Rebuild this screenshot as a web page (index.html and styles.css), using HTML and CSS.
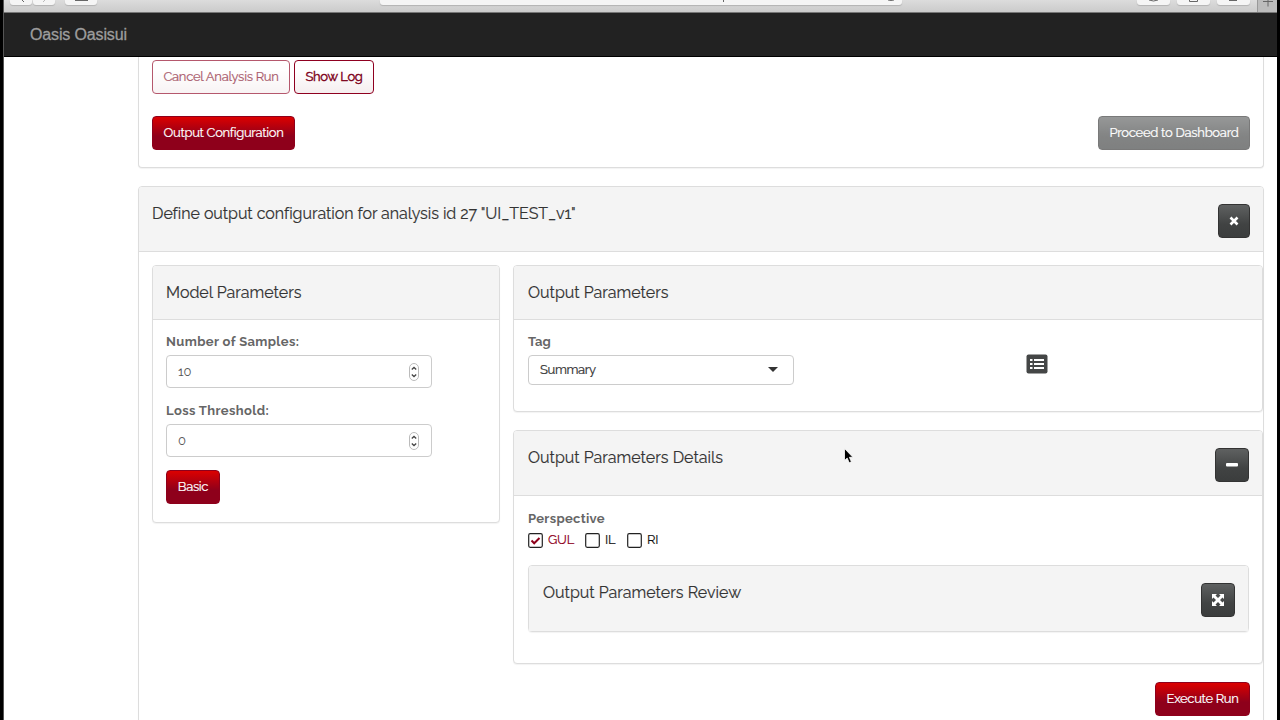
FILE: index.html
```
<!DOCTYPE html>
<html lang="en">
  <head>
    <meta charset="UTF-8" />
    <meta name="viewport" content="width=device-width, initial-scale=1.0" />
    <title>Oasis Oasisui</title>
    <link rel="stylesheet" href="styles.css">
  </head>
  <body>
    <div class="window">
      <div class="toolbar">
        <div class="tool nav-tool">
          <svg width="22" height="5"><path d="M12 0l2 2" /></svg>
        </div>
        <div class="tool nav-tool">
          <svg width="22" height="5"><path class="faint" d="M12 0l-2 2" /></svg>
        </div>
        <div class="tool tabs-tool">
          <svg width="32" height="5"><path d="M10 .5h13" /></svg>
        </div>
        <div class="address">
          <svg width="522" height="5"><path d="M343.500 0v2M508 0q3 1 6 0" /></svg>
        </div>
        <div class="tools-right">
          <div class="tool side-tool">
            <svg width="33" height="5"><path d="M12 0q4.500 2 9 0" /></svg>
          </div>
          <div class="tool side-tool">
            <svg width="33" height="5"><path d="M12.500 0v1.500h8V0" /></svg>
          </div>
          <div class="tool side-tool">
            <svg width="33" height="5"><path d="M12 .5h8" /></svg>
          </div>
        </div>
        <div class="new-tab">
          <svg width="20" height="12"><path d="M5 1.500h10M10 0v6.500" /></svg>
        </div>
      </div>

      <nav class="navbar"><span class="brand">Oasis Oasisui</span></nav>

      <main class="content">
        <section class="panel run-panel">
          <div class="row run-buttons">
            <button class="btn btn-outline cancel" disabled>Cancel Analysis Run</button>
            <button class="btn btn-outline log">Show Log</button>
          </div>
          <div class="row between">
            <button class="btn btn-primary configure">Output Configuration</button>
            <button class="btn btn-dark dashboard" disabled>Proceed to Dashboard</button>
          </div>
        </section>

        <section class="panel config-panel">
          <header class="panel-heading tall">
            <h4 class="config-title">Define output configuration for analysis id 27 "UI_TEST_v1"</h4>
            <button class="btn btn-dark icon-btn close" aria-label="Close">
              <svg width="10" height="10" viewBox="0 0 10 10"><path class="cross" d="M1.500 1.500l7 7M8.500 1.500l-7 7" /></svg>
            </button>
          </header>

          <div class="config-body">
            <section class="panel model-panel">
              <header class="panel-heading">
                <h4>Model Parameters</h4>
              </header>
              <div class="panel-body">
                <label class="label" for="samples">Number of Samples:</label>
                <div class="field">
                  <input id="samples" type="text" value="10" />
                  <svg class="spinner" width="10" height="18" viewBox="0 0 10 18"><rect x=".5" y=".5" width="9" height="17" rx="4.500" /><path d="M2.800 6.500L5 4.500l2.200 2M2.800 11.500l2.200 2 2.200-2" /></svg>
                </div>
                <label class="label" for="threshold">Loss Threshold:</label>
                <div class="field last">
                  <input id="threshold" type="text" value="0" />
                  <svg class="spinner" width="10" height="18" viewBox="0 0 10 18"><rect x=".5" y=".5" width="9" height="17" rx="4.500" /><path d="M2.800 6.500L5 4.500l2.200 2M2.800 11.500l2.200 2 2.200-2" /></svg>
                </div>
                <button class="btn btn-primary basic">Basic</button>
              </div>
            </section>

            <div class="output-column">
              <section class="panel output-panel">
                <header class="panel-heading">
                  <h4>Output Parameters</h4>
                </header>
                <div class="panel-body tag-row">
                  <div class="tag-field">
                    <span class="label tag-label">Tag</span>
                    <div class="select"><span>Summary</span><i class="caret"></i></div>
                  </div>
                  <svg class="list-icon" width="22" height="20" viewBox="0 0 22 20">
                    <rect class="list-back" x=".5" y=".5" width="21" height="19" rx="2" />
                    <path d="M4 6h2.500M8 6h10M4 10h2.500M8 10h10M4 14h2.500M8 14h10" />
                  </svg>
                </div>
              </section>

              <section class="panel details-panel">
                <header class="panel-heading tall">
                  <h4>Output Parameters Details</h4>
                  <button class="btn btn-dark icon-btn" aria-label="Collapse">
                    <svg width="12" height="4" viewBox="0 0 12 4"><rect width="12" height="3.500" rx="1" fill="#fff" /></svg>
                  </button>
                </header>
                <div class="panel-body">
                  <span class="label perspective">Perspective</span>
                  <div class="checks">
                    <label class="check">
                      <svg width="15" height="15" viewBox="0 0 15 15"><rect x=".7" y=".7" width="13.600" height="13.600" rx="1.500" /><path d="M3.500 7.500l2.700 2.800 5.300-5.300" /></svg>
                      <span class="gul">GUL</span>
                    </label>
                    <label class="check">
                      <svg width="15" height="15" viewBox="0 0 15 15"><rect x=".7" y=".7" width="13.600" height="13.600" rx="1.500" /></svg>
                      <span class="il">IL</span>
                    </label>
                    <label class="check">
                      <svg width="15" height="15" viewBox="0 0 15 15"><rect x=".7" y=".7" width="13.600" height="13.600" rx="1.500" /></svg>
                      <span>RI</span>
                    </label>
                  </div>
                  <section class="panel review-panel">
                    <header class="panel-heading tall">
                      <h4>Output Parameters Review</h4>
                      <button class="btn btn-dark icon-btn" aria-label="Expand">
                        <svg width="12" height="12" viewBox="0 0 12 12"><path fill="#fff" d="M0 0h5L3.500 1.500 6 4l2.500-2.500L7 0h5v5l-1.500-1.500L8 6l2.500 2.500L12 7v5H7l1.500-1.500L6 8l-2.500 2.500L5 12H0V7l1.500 1.500L4 6 1.500 3.500 0 5z" /></svg>
                      </button>
                    </header>
                  </section>
                </div>
              </section>

              <div class="actions">
                <button class="btn btn-primary execute">Execute Run</button>
              </div>
            </div>
          </div>
        </section>
      </main>
    </div>

    <svg class="pointer" width="12" height="18" viewBox="0 0 12 18"><path d="M1.500 1.500v12l2.700-2.400 2 4.700 2.200-1-2-4.500h3.500z" /></svg>
  </body>
</html>
```
FILE: styles.css
```
* {
  box-sizing: border-box;
}

body {
  margin: 0;
  height: 720px;
  overflow: hidden;
  background: #000;
  color: #333;
  font-family: Raleway, Lato, sans-serif;
  font-size: 13px;
}

svg {
  display: block;
  fill: none;
}

.window {
  height: 720px;
  margin: 0 3px;
  overflow: hidden;
  background: #fff;
  border-left: 1px solid #555;
}

/* browser toolbar */
.toolbar {
  display: flex;
  height: 13px;
  padding-left: 6px;
  background: linear-gradient(#dcdcdc, #cbcbcb);
  border-bottom: 1px solid #777;
}

.tool,
.address {
  height: 5px;
  background: #f5f5f5;
  border-radius: 0 0 3px 3px;
  box-shadow: 0 1px 1px #b3b3b3;
}

.tool path,
.address path {
  stroke: #666;
}

.tool .faint {
  stroke: #bbb;
}

.nav-tool {
  width: 22px;
  margin-right: 1px;
}

.tabs-tool {
  width: 32px;
  margin-left: 9px;
}

.address {
  width: 522px;
  margin-left: 283px;
}

.tools-right {
  display: flex;
  gap: 7px;
  margin-left: auto;
}

.side-tool {
  width: 33px;
}

.new-tab {
  width: 20px;
  margin-left: 7px;
  background: #bcbcbc;
  border-left: 1px solid #999;
}

.new-tab path {
  stroke: #666;
}

.navbar {
  height: 44px;
  padding: 13px 26px;
  background: #222;
  border-bottom: 1px solid #000;
}

.brand {
  display: block;
  color: #9d9d9d;
  font-family: "Liberation Sans", Arial, sans-serif;
  font-size: 16px;
  line-height: 18px;
  letter-spacing: -0.14px;
  -webkit-text-stroke: 0.3px;
}

/* panels */
.content {
  padding: 0 13px 0 134px;
}

.panel {
  background: #fff;
  border: 1px solid #ddd;
  border-radius: 4px;
  box-shadow: 0 1px 1px rgba(0, 0, 0, 0.05);
}

.panel-heading {
  display: flex;
  justify-content: space-between;
  height: 54px;
  padding: 17px 13px 0;
  background: #f4f4f4;
  border-bottom: 1px solid #ddd;
  border-radius: 3px 3px 0 0;
}

.panel-heading.tall {
  height: 65px;
}

.panel-body {
  padding: 14px 13px;
}

h4 {
  margin: 0;
  font-size: 16px;
  font-weight: 400;
  line-height: 20px;
  white-space: nowrap;
  -webkit-text-stroke: 0.15px;
}

.config-title {
  letter-spacing: -0.06px;
}

.row {
  display: flex;
}

.between {
  justify-content: space-between;
}

.run-panel {
  height: 111px;
  padding: 3px 13px 0;
  border-top: 0;
  border-radius: 0 0 4px 4px;
}

.run-buttons {
  gap: 4px;
  margin-bottom: 22px;
}

.config-panel {
  height: 560px;
  margin-top: 18px;
}

.config-body {
  display: flex;
  gap: 13px;
  padding: 13px 0 0 13px;
}

.model-panel {
  width: 348px;
  height: 258px;
}

.output-column {
  flex: 1;
}

.output-column .panel-heading,
.output-column .panel-body {
  padding-left: 14px;
}

.output-panel {
  height: 147px;
}

.details-panel {
  height: 234px;
  margin-top: 18px;
}

.review-panel {
  height: 67px;
  margin-top: 17px;
}

.review-panel .panel-heading {
  border-bottom: 0;
}

/* buttons */
.btn {
  height: 34px;
  padding: 0 0 2px;
  border: 1px solid;
  border-radius: 4px;
  font-family: inherit;
  font-size: 13px;
  font-weight: 400;
  letter-spacing: -0.33px;
  white-space: nowrap;
  text-align: center;
  -webkit-text-stroke: 0.2px;
}

.btn-outline {
  color: #7c0019;
  background: linear-gradient(#fff 30%, #f5eeef);
  border-color: #8f0020;
}

.btn-primary {
  color: #fff;
  background: linear-gradient(#dc0000, #8e001b 60%, #8e001b);
  border-color: #8e001b;
}

.btn-dark {
  color: #fff;
  background: linear-gradient(#5f6161, #414343 60%, #3b3d3d);
  border-color: #333;
}

.btn:disabled {
  opacity: 0.65;
}

.cancel {
  width: 138px;
  letter-spacing: -0.27px;
}

.log {
  width: 80px;
  -webkit-text-stroke: 0.4px;
}

.configure {
  width: 143px;
}

.dashboard {
  width: 152px;
  letter-spacing: -0.28px;
}

.basic {
  width: 54px;
}

.execute {
  width: 95px;
}

.icon-btn {
  display: flex;
  align-items: center;
  justify-content: center;
  width: 34px;
  padding: 0;
}

.close {
  width: 32px;
}

.cross {
  stroke: #fff;
  stroke-width: 2.6;
}

/* form controls */
.label {
  display: block;
  height: 16px;
  margin-bottom: 5px;
  color: #666;
  font-size: 13px;
  font-weight: 700;
  line-height: 16px;
  letter-spacing: 0.37px;
}

.tag-label {
  letter-spacing: 0;
}

.perspective {
  margin-top: 1px;
  letter-spacing: 0.3px;
}

.field {
  display: flex;
  align-items: center;
  width: 266px;
  height: 33px;
  margin-bottom: 15px;
  padding: 0 12px 0 11px;
  border: 1px solid #ccc;
  border-radius: 4px;
}

.field.last {
  margin-bottom: 13px;
}

.field input {
  flex: 1;
  min-width: 0;
  padding: 0;
  border: 0;
  outline: 0;
  color: #555;
  font-family: inherit;
  font-size: 13px;
}

.spinner rect {
  stroke: #bbb;
}

.spinner path {
  stroke: #444;
  stroke-width: 1.3;
}

.tag-row {
  display: flex;
}

.tag-field {
  width: 266px;
}

.select {
  display: flex;
  align-items: center;
  justify-content: space-between;
  height: 30px;
  padding: 0 15px 1px 11px;
  border: 1px solid #ccc;
  border-radius: 4px;
  letter-spacing: -0.35px;
  -webkit-text-stroke: 0.2px;
}

.caret {
  border: 5px solid transparent;
  border-top-color: #333;
  border-bottom: 0;
}

.list-icon {
  margin: 20px 0 0 232px;
}

.list-back {
  fill: #444646;
}

.list-icon path {
  stroke: #fff;
  stroke-width: 2;
}

.checks {
  display: flex;
  align-items: center;
  height: 16px;
  color: #111;
}

.check {
  display: flex;
  align-items: center;
  gap: 5px;
}

.check span {
  padding-bottom: 2px;
  letter-spacing: -0.2px;
  -webkit-text-stroke: 0.15px;
}

.check rect {
  stroke: #222;
  stroke-width: 1.2;
}

.check path {
  stroke: #8e001b;
  stroke-width: 2;
}

.check .gul {
  width: 37px;
  color: #8e001b;
}

.il {
  width: 22px;
}

.actions {
  display: flex;
  justify-content: flex-end;
  padding: 18px 13px 0 0;
}

/* mouse pointer */
.pointer {
  position: absolute;
  left: 843px;
  top: 447px;
}

.pointer path {
  fill: #000;
  stroke: #fff;
  stroke-width: 0.8;
}
```
